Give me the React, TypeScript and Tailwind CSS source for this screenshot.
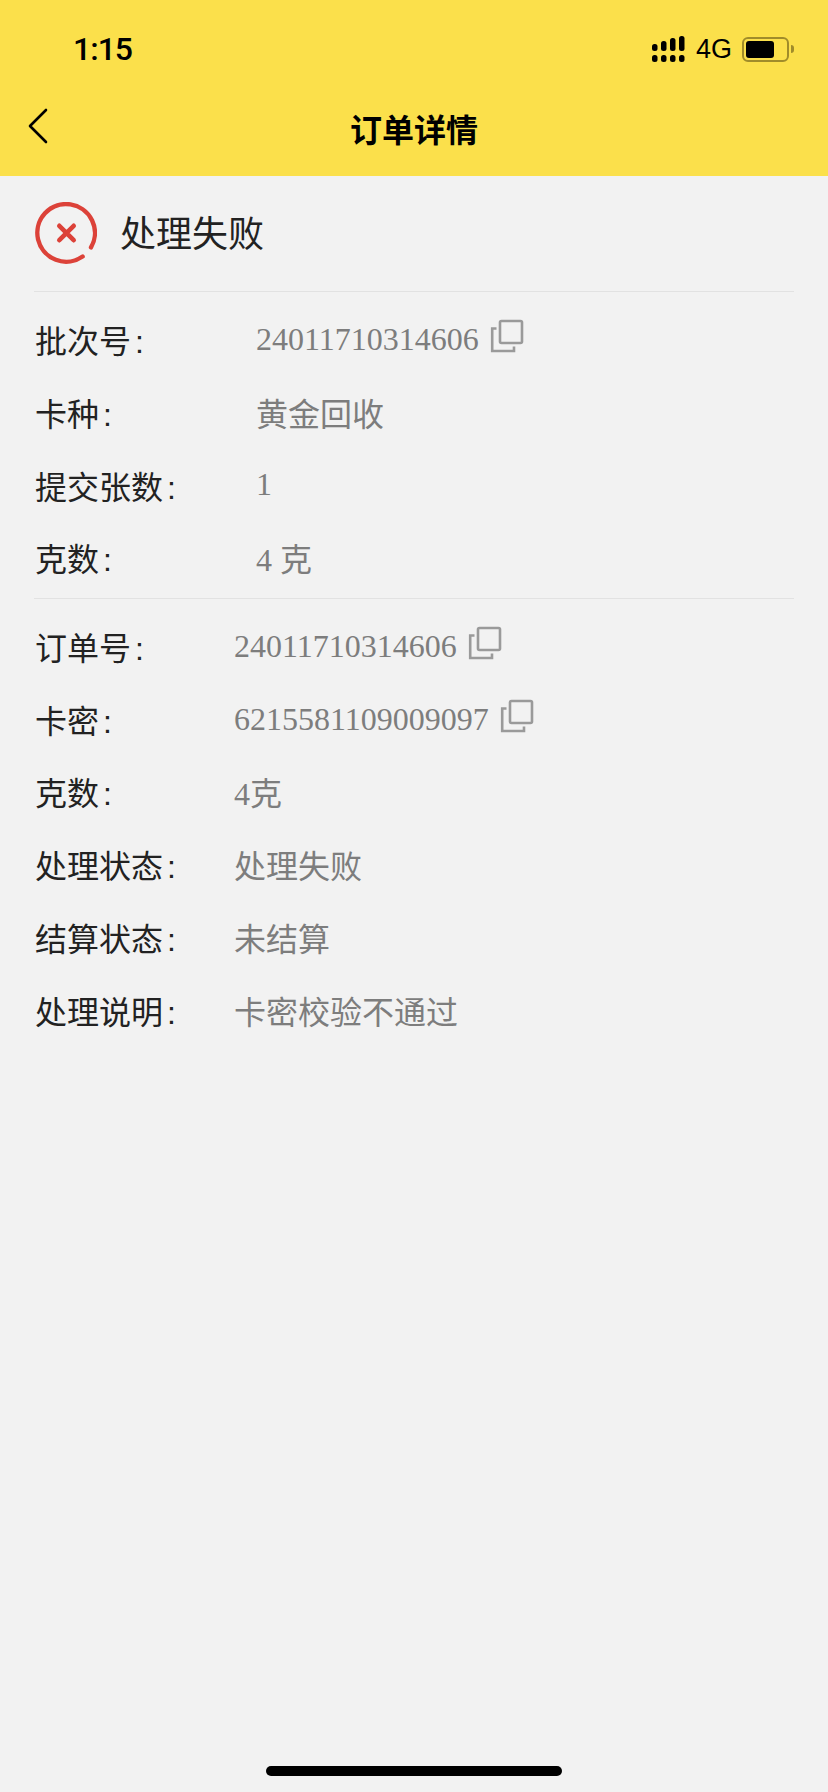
const CopyIcon = () => (
  <svg width="34" height="34" viewBox="0 0 34 34" fill="none" stroke="#9a9a9a" strokeWidth="2.6" className="ml-[11px] mb-[6px] shrink-0">
    <rect x="10" y="2" width="22" height="22" rx="1.5" />
    <path d="M6.5 9.5H2.2V32H24V27.5" />
  </svg>
);

const FailIcon = () => (
  <svg width="62" height="62" viewBox="0 0 62 62" fill="none" stroke="#dc4239" strokeLinecap="round" className="ml-[1px] shrink-0">
    <path d="M47.6 54.5A28.8 28.8 0 1 1 56 45.4" strokeWidth="4.4" />
    <path d="M24.3 23.8L38.7 38.2M38.7 23.8L24.3 38.2" strokeWidth="4.6" />
  </svg>
);

const Signal = () => (
  <svg width="33" height="26" viewBox="0 0 33 26" fill="#000">
    <rect x="0" y="8" width="5.5" height="7" rx="2.5" />
    <rect x="9" y="5" width="5.5" height="10" rx="2.5" />
    <rect x="18" y="2" width="5.5" height="13" rx="2.5" />
    <rect x="27" y="0" width="5.5" height="15" rx="2.5" />
    <rect x="0" y="19" width="5.5" height="7" rx="2.5" />
    <rect x="9" y="19" width="5.5" height="7" rx="2.5" />
    <rect x="18" y="19" width="5.5" height="7" rx="2.5" />
    <rect x="27" y="19" width="5.5" height="7" rx="2.5" />
  </svg>
);

const Battery = () => (
  <div className="flex items-center">
    <div className="w-[47px] h-[25px] rounded-[6px] border-2 border-[#a08c2a] p-[2px]">
      <div className="w-[28px] h-full rounded-[3px] bg-black" />
    </div>
    <div className="ml-[2px] w-[3px] h-[8px] rounded-r-full bg-[#a08c2a]" />
  </div>
);

type Item = { label: string; value: string; copy?: boolean; lift?: string };

const batch: Item[] = [
  { label: '批次号', value: '24011710314606', copy: true, lift: 'mb-[6px]' },
  { label: '卡种', value: '黄金回收' },
  { label: '提交张数', value: '1', lift: 'mb-[8px]' },
  { label: '克数', value: '4 克' },
];

const cards: Item[] = [
  { label: '订单号', value: '24011710314606', copy: true, lift: 'mb-[6px]' },
  { label: '卡密', value: '6215581109009097', copy: true, lift: 'mb-[6px]' },
  { label: '克数', value: '4克' },
  { label: '处理状态', value: '处理失败' },
  { label: '结算状态', value: '未结算' },
  { label: '处理说明', value: '卡密校验不通过' },
];

const Row = ({ item, labelWidth }: { item: Item; labelWidth: string }) => (
  <div className="flex items-center h-[72.7px]">
    <div className={`pl-[1px] text-[32px] text-[#222222] shrink-0 ${labelWidth}`}>
      {item.label}
      <span className="ml-[4px] font-['Liberation_Sans',sans-serif]">:</span>
    </div>
    <div className={`flex items-center text-[#7d7d7d] text-[32px] ${item.lift ?? ''}`}>
      <span>{item.value}</span>
      {item.copy && <CopyIcon />}
    </div>
  </div>
);

export default function App() {
  return (
    <div className="w-[828px] h-[1792px] bg-[#f2f2f2] flex flex-col font-['Liberation_Serif','Noto_Sans_CJK_SC',sans-serif]">
      <header className="h-[176px] shrink-0 bg-[#fbe04b] font-['Liberation_Sans','Noto_Sans_CJK_SC',sans-serif] text-black">
        <div className="h-[88px] pt-[10px] pl-[73px] pr-[34px] flex items-center justify-between">
          <span className="text-[32px] font-medium tracking-[-1px] font-['Roboto',sans-serif]">1:15</span>
          <div className="flex items-center">
            <Signal />
            <span className="text-[27px] ml-[11px] mr-[10px]">4G</span>
            <Battery />
          </div>
        </div>
        <div className="relative h-[88px] flex items-center justify-center">
          <svg width="24" height="36" viewBox="0 0 24 36" fill="none" stroke="#000" strokeWidth="2.6" strokeLinecap="round" strokeLinejoin="round" className="absolute left-[27px] top-[20px]">
            <path d="M19 2L3 18L19 34" />
          </svg>
          <span className="text-[32px] font-bold mt-[-3px]">订单详情</span>
        </div>
      </header>

      <main className="px-[34px]">
        <div className="h-[116px] flex items-center border-b border-[#e2e2e2] font-['Noto_Sans_CJK_SC',sans-serif] pb-[2px]">
          <FailIcon />
          <span className="ml-[23px] mb-[3px] text-[36px] text-[#222222]">处理失败</span>
        </div>
        <div className="pt-[14px] pb-[1px] border-b border-[#e2e2e2]">
          {batch.map(item => (
            <Row key={item.label} item={item} labelWidth="w-[222px]" />
          ))}
        </div>
        <div className="pt-[14px]">
          {cards.map(item => (
            <Row key={item.label} item={item} labelWidth="w-[200px]" />
          ))}
        </div>
      </main>

      <div className="mt-auto mb-[16px] mx-auto w-[296px] h-[10px] rounded-full bg-black" />
    </div>
  );
}
